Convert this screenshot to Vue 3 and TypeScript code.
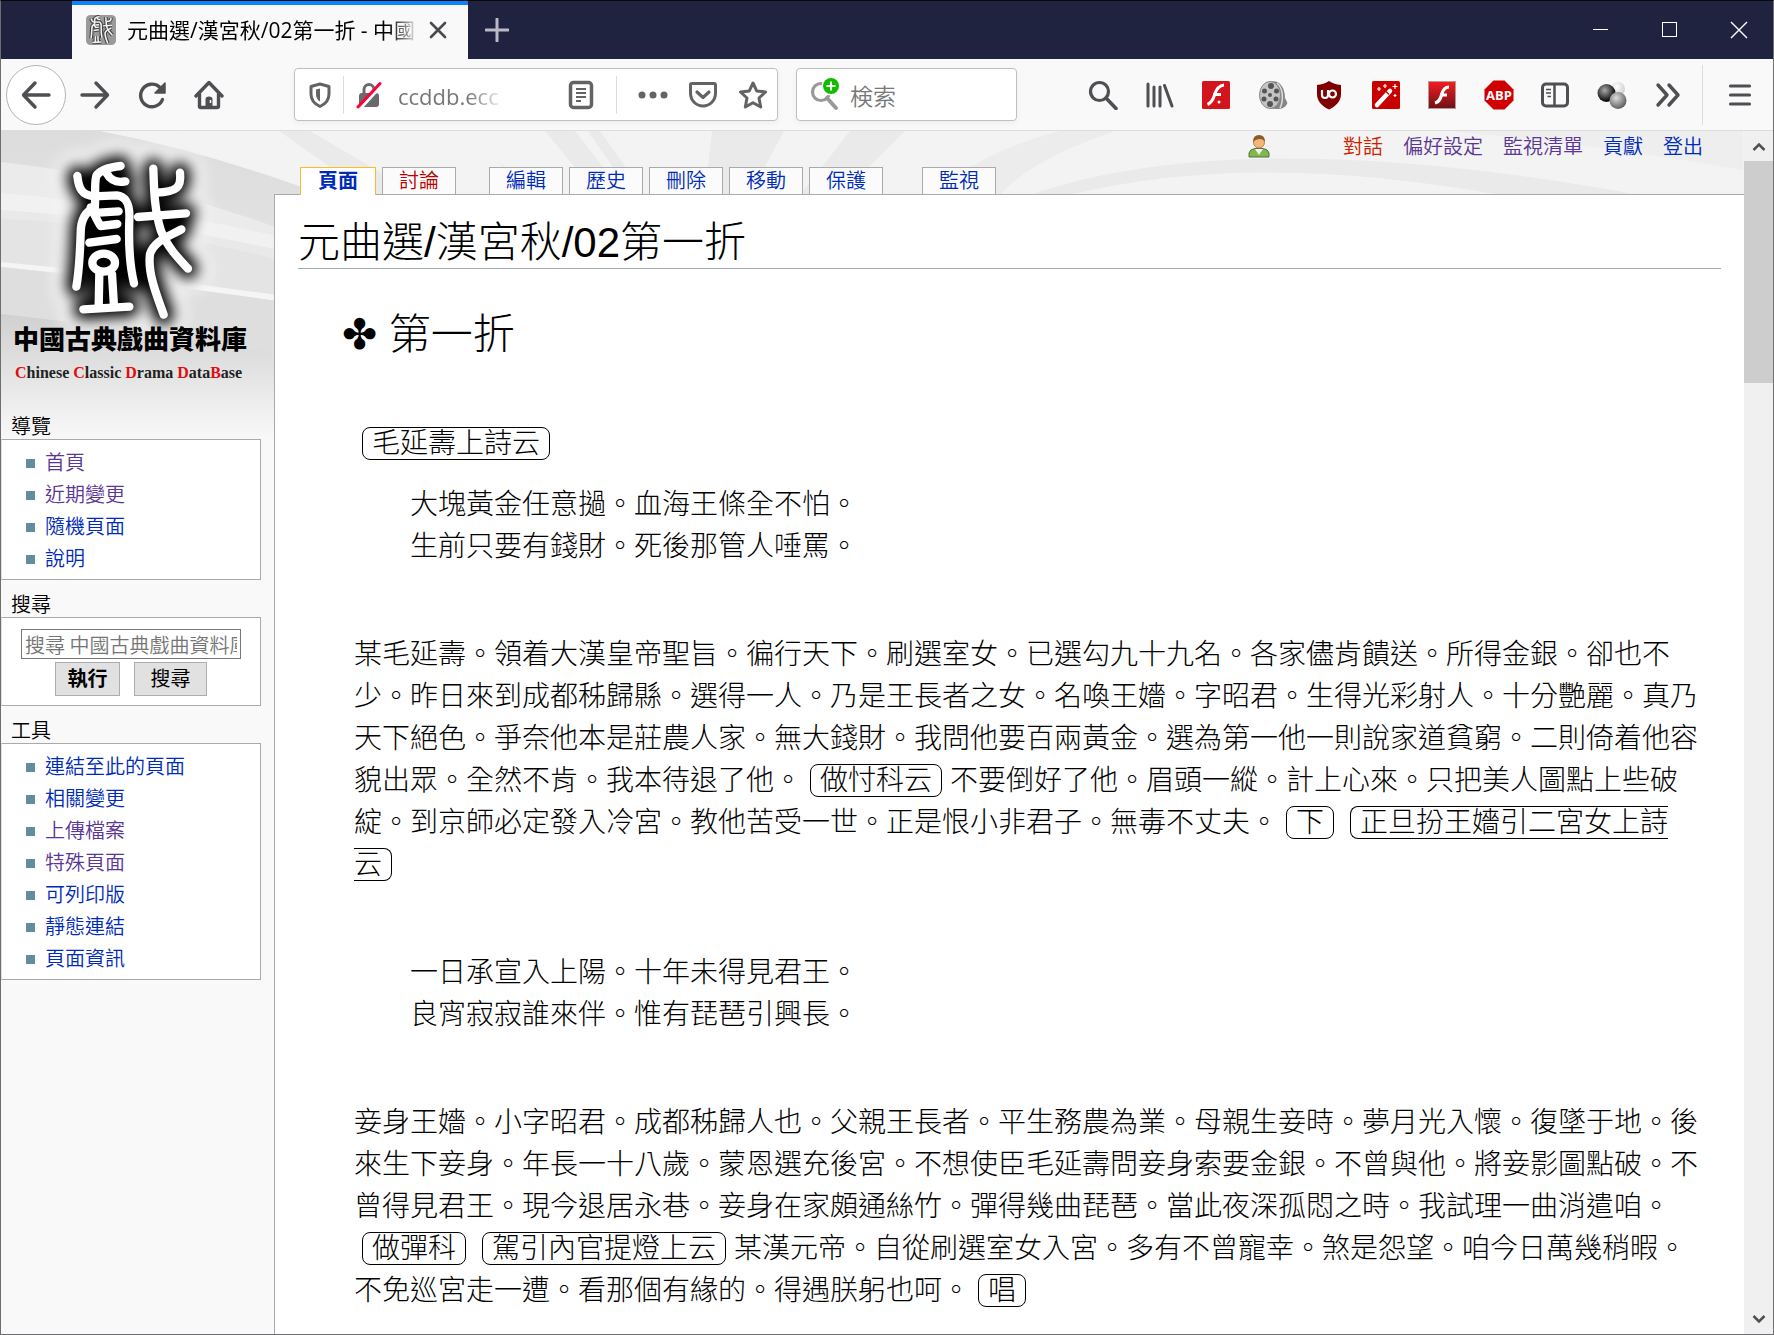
<script setup lang="ts">
interface NavLink { text: string; tone: 'new' | 'visited' | 'plain' }
interface Segment { text: string; cue?: boolean }

const personal: NavLink[] = [
  { text: '對話', tone: 'new' },
  { text: '偏好設定', tone: 'visited' },
  { text: '監視清單', tone: 'visited' },
  { text: '貢獻', tone: 'plain' },
  { text: '登出', tone: 'plain' },
]
const tabGroups: { text: string; kind?: string }[][] = [
  [{ text: '頁面', kind: 'current' }, { text: '討論', kind: 'missing' }],
  [{ text: '編輯' }, { text: '歷史' }, { text: '刪除' }, { text: '移動' }, { text: '保護' }],
  [{ text: '監視' }],
]
const navigation: NavLink[] = [
  { text: '首頁', tone: 'visited' },
  { text: '近期變更', tone: 'visited' },
  { text: '隨機頁面', tone: 'plain' },
  { text: '說明', tone: 'plain' },
]
const tools: NavLink[] = [
  { text: '連結至此的頁面', tone: 'plain' },
  { text: '相關變更', tone: 'plain' },
  { text: '上傳檔案', tone: 'visited' },
  { text: '特殊頁面', tone: 'visited' },
  { text: '可列印版', tone: 'plain' },
  { text: '靜態連結', tone: 'plain' },
  { text: '頁面資訊', tone: 'plain' },
]
const speechOne: Segment[] = [
  { text: '某毛延壽。領着大漢皇帝聖旨。徧行天下。刷選室女。已選勾九十九名。各家儘肯饋送。所得金銀。卻也不少。昨日來到成都秭歸縣。選得一人。乃是王長者之女。名喚王嬙。字昭君。生得光彩射人。十分艷麗。真乃天下絕色。爭奈他本是莊農人家。無大錢財。我問他要百兩黃金。選為第一他一則說家道貧窮。二則倚着他容貌出眾。全然不肯。我本待退了他。' },
  { text: '做忖科云', cue: true },
  { text: '不要倒好了他。眉頭一縱。計上心來。只把美人圖點上些破綻。到京師必定發入冷宮。教他苦受一世。正是恨小非君子。無毒不丈夫。' },
  { text: '下', cue: true },
  { text: '正旦扮王嬙引二宮女上詩云', cue: true },
]
const speechTwo: Segment[] = [
  { text: '妾身王嬙。小字昭君。成都秭歸人也。父親王長者。平生務農為業。母親生妾時。夢月光入懷。復墜于地。後來生下妾身。年長一十八歲。蒙恩選充後宮。不想使臣毛延壽問妾身索要金銀。不曾與他。將妾影圖點破。不曾得見君王。現今退居永巷。妾身在家頗通絲竹。彈得幾曲琵琶。當此夜深孤悶之時。我試理一曲消遣咱。' },
  { text: '做彈科', cue: true },
  { text: '駕引內官提燈上云', cue: true },
  { text: '某漢元帝。自從刷選室女入宮。多有不曾寵幸。煞是怨望。咱今日萬幾稍暇。不免巡宮走一遭。看那個有緣的。得遇朕躬也呵。' },
  { text: '唱', cue: true },
]
const sealStrokes: string[] = [
  'M362 138C335 141 300 148 289 168C282 190 288 230 284 268',
  'M320 160C330 178 345 190 376 184',
  'M232 168C236 205 245 226 282 229L350 226C385 230 390 262 388 300C385 380 390 440 402 490',
  'M284 264C256 274 242 300 242 340C240 400 238 450 229 500',
  'M272 262C285 285 292 305 302 318L352 312',
  'M296 278L356 274',
  'M268 368L350 357',
  'M298 462L296 560',
  'M336 462L342 560',
  'M250 568L388 560',
  'M460 146C462 200 462 265 482 330C500 380 540 420 564 446',
  'M540 158C545 202 530 216 470 218',
  'M414 291L558 280',
  'M544 328C510 348 464 360 450 402C442 460 472 530 491 584',
]
</script>

<template>
  <div class="window" lang="zh-TW">
    <header class="titlebar">
      <div class="browser-tab">
        <svg class="favicon" viewBox="150 110 470 500" preserveAspectRatio="none" aria-hidden="true">
          <rect x="150" y="110" width="470" height="500" rx="70" fill="#9a9a9a" />
          <g fill="none" stroke="#444" stroke-width="58"><path v-for="d in sealStrokes" :key="d" :d="d" /></g>
          <g fill="none" stroke="#f5f5f5" stroke-width="24"><path v-for="d in sealStrokes" :key="d" :d="d" /></g>
        </svg>
        <span class="tab-title">元曲選/漢宮秋/02第一折 - 中國</span>
        <button class="bare tab-close" type="button" aria-label="閉じる">
          <svg width="18" height="18" viewBox="0 0 18 18"><path d="M2 2L16 16M16 2L2 16" stroke="#4a4a4f" stroke-width="2.6" stroke-linecap="round" /></svg>
        </button>
      </div>
      <button class="bare new-tab" type="button" aria-label="新しいタブ">
        <svg width="24" height="24" viewBox="0 0 24 24"><path d="M12 1V23M1 12H23" stroke="#b9bac6" stroke-width="3" stroke-linecap="round" /></svg>
      </button>
      <div class="window-controls">
        <button class="bare" type="button" aria-label="最小化"><svg width="16" height="18" viewBox="0 0 16 18"><path d="M0 8.500H15" stroke="#fff" /></svg></button>
        <button class="bare" type="button" aria-label="最大化"><svg width="16" height="18" viewBox="0 0 16 18"><rect x=".5" y="1.500" width="14" height="14" fill="none" stroke="#fff" /></svg></button>
        <button class="bare" type="button" aria-label="閉じる"><svg width="18" height="18" viewBox="0 0 18 18"><path d="M1 1L17 17M17 1L1 17" stroke="#fff" stroke-width="1.400" /></svg></button>
      </div>
    </header>

    <nav class="toolbar" aria-label="ツールバー">
      <button class="bare back" type="button" aria-label="戻る">
        <svg width="30" height="30" viewBox="0 0 30 30"><path d="M28 15H3M14 3L2.500 15L14 27" class="line" /></svg>
      </button>
      <button class="bare tool" type="button" aria-label="進む">
        <svg width="30" height="30" viewBox="0 0 30 30"><path d="M2 15H27M16 3L27.500 15L16 27" class="line" /></svg>
      </button>
      <button class="bare tool" type="button" aria-label="再読み込み">
        <svg width="30" height="30" viewBox="0 0 30 30"><path d="M25.500 19.500A11.300 11.300 0 1 1 22.500 7" class="line" /><path d="M28 3V13H18Z" fill="#4f4f53" stroke="#4f4f53" stroke-width="1.500" stroke-linejoin="round" /></svg>
      </button>
      <button class="bare tool" type="button" aria-label="ホーム">
        <svg width="30" height="30" viewBox="0 0 30 30"><path d="M2 16L15 2.500L28 16" class="line" /><path d="M5.500 14V26.500Q5.500 27.500 7 27.500H23Q24.500 27.500 24.500 26V14" class="line" /><path d="M11.500 27V19Q11.500 16.500 15 16.500Q18.500 16.500 18.500 19V27Z" fill="#4f4f53" /><path d="M16.500 20v3" stroke="#fff" stroke-width="1.500" /></svg>
      </button>

      <div class="urlbar">
        <svg width="22" height="26" viewBox="0 0 22 26"><path d="M11 2L20 4.500V12C20 18 16.500 22 11 24.500C5.500 22 2 18 2 12V4.500Z" fill="none" stroke="#636366" stroke-width="3" stroke-linejoin="round" /><path d="M11 6.500L7 7.500V12C7 15.500 8.500 18 11 19.500Z" fill="#636366" /></svg>
        <i class="divider"></i>
        <svg width="26" height="28" viewBox="0 0 26 28"><rect x="3" y="12" width="20" height="14" rx="3" fill="#6a6a6e" /><path d="M8 13V8.500a5 5 0 0 1 10 0V13" fill="none" stroke="#6a6a6e" stroke-width="3" /><path d="M4.500 27.500L25.500 4.500" stroke="#fff" stroke-width="3" /><path d="M2 26L24 2.500" stroke="#ff0039" stroke-width="3" stroke-linecap="round" /></svg>
        <input class="address" type="text" value="ccddb.ecc" aria-label="アドレス" />
        <svg width="26" height="30" viewBox="0 0 26 30"><rect x="2.500" y="2.500" width="21" height="25" rx="3" fill="none" stroke="#636366" stroke-width="3.500" /><path d="M8 9H18M8 13H18M8 17H18M8 21H13" stroke="#636366" stroke-width="1.800" /></svg>
        <i class="divider far"></i>
        <svg width="30" height="10" viewBox="0 0 30 10"><g fill="#636366"><circle cx="4" cy="5" r="3.500" /><circle cx="15" cy="5" r="3.500" /><circle cx="26" cy="5" r="3.500" /></g></svg>
        <svg class="page-action" width="30" height="28" viewBox="0 0 30 28"><path d="M4 2.500H26Q27.500 2.500 27.500 4V12C27.500 19.500 22 25 15 25S2.500 19.500 2.500 12V4Q2.500 2.500 4 2.500Z" fill="none" stroke="#636366" stroke-width="3" /><path d="M9 11L15 16.500L21 11" fill="none" stroke="#636366" stroke-width="3.200" stroke-linecap="round" stroke-linejoin="round" /></svg>
        <svg class="page-action" width="30" height="30" viewBox="0 0 30 30"><path d="M15 3L18.700 10.900L27.500 12L21 18L22.700 27L15 22.700L7.300 27L9 18L2.500 12L11.300 10.900Z" fill="none" stroke="#636366" stroke-width="3" stroke-linejoin="round" /></svg>
      </div>

      <label class="searchbar">
        <svg width="34" height="36" viewBox="0 0 34 36"><circle cx="12" cy="15" r="8.500" fill="none" stroke="#999" stroke-width="3.200" /><path d="M18 21L27 31" stroke="#999" stroke-width="4" stroke-linecap="round" /><circle cx="22" cy="9" r="9.500" fill="#fff" /><circle cx="22" cy="9" r="8" fill="#12bc00" /><path d="M22 4.500V13.500M17.500 9H26.500" stroke="#fff" stroke-width="1.800" /></svg>
        <input type="text" placeholder="検索" aria-label="検索" />
      </label>

      <div class="extensions">
        <button class="bare" type="button" aria-label="検索"><svg width="30" height="30" viewBox="0 0 30 30"><circle cx="11.500" cy="11.500" r="9" fill="none" stroke="#4f4f53" stroke-width="3.200" /><path d="M18 18L28 28.500" stroke="#4f4f53" stroke-width="3.600" stroke-linecap="round" /></svg></button>
        <button class="bare" type="button" aria-label="ライブラリー"><svg width="30" height="30" viewBox="0 0 30 30"><path d="M3 4V26M9 7V26M15 7V26M19.500 5.500L27 26" stroke="#4f4f53" stroke-width="3" stroke-linecap="round" /></svg></button>
        <button class="bare" type="button" aria-label="Flash"><svg width="30" height="30" viewBox="0 0 30 30"><rect x="1" y="1" width="28" height="28" rx="1.500" fill="#d3141c" /><path d="M23 5C17 5.500 15 10 13.500 15S10 23 6.500 24.500" fill="none" stroke="#fff" stroke-width="3" /><path d="M12 14.500H20" stroke="#fff" stroke-width="3" /><circle cx="18" cy="22" r="1.500" fill="#fff" /></svg></button>
        <button class="bare" type="button" aria-label="Video"><svg width="30" height="30" viewBox="0 0 30 30"><path d="M13 1.500C22 0 27 8 27 18L29.500 23Q27 29.500 18 29L11 28.500Z" fill="#858585" /><path d="M19 3C25 8 26 20 22 28" fill="none" stroke="#ddd" stroke-width="1.500" /><ellipse cx="12" cy="15" rx="10.500" ry="13.500" fill="#c4c4c4" stroke="#888" /><g fill="#555"><circle cx="13" cy="6" r="3" /><circle cx="6.500" cy="11" r="2.500" /><circle cx="6" cy="19" r="2.500" /><circle cx="12" cy="24" r="3" /><circle cx="18" cy="19" r="2.500" /><circle cx="18.500" cy="11" r="2.500" /><circle cx="12" cy="15" r="2" /></g></svg></button>
        <button class="bare" type="button" aria-label="uBlock"><svg width="30" height="30" viewBox="0 0 30 30"><path d="M15 1Q20 4.500 27 5V14C27 21.500 22 26 15 29.500C8 26 3 21.500 3 14V5Q10 4.500 15 1Z" fill="#800000" /><path d="M8 10V15a3 3 0 0 0 6 0V10M14 10V15" fill="none" stroke="#fff" stroke-width="2.200" /><circle cx="18.500" cy="14" r="3.500" fill="none" stroke="#fff" stroke-width="2.200" /></svg></button>
        <button class="bare" type="button" aria-label="Wand"><svg width="30" height="30" viewBox="0 0 30 30"><rect x="1" y="1" width="28" height="28" rx="1.500" fill="#c90000" /><path d="M6 25L19 11" stroke="#fff" stroke-width="4.500" stroke-linecap="round" /><path d="M15 11.500l3 3" stroke="#c90000" stroke-width="1.200" /><g stroke="#fff" stroke-width="1.200"><path d="M14 4v4M12 6h4M24 4v5M21.500 6.500h5M8 7v4M6 9h4M24 14v3M22.500 15.500h3" /></g></svg></button>
        <button class="bare" type="button" aria-label="Flash"><svg width="30" height="30" viewBox="0 0 30 30"><defs><linearGradient id="flashFill" x1="0" y1="0" x2="0" y2="1"><stop offset="0" stop-color="#f51d20" /><stop offset="1" stop-color="#6c1216" /></linearGradient></defs><rect x="1.500" y="1.500" width="27" height="27" fill="url(#flashFill)" stroke="#b99" /><path d="M22 7C17 7 15.500 11 14.500 15S12 22 8 23" fill="none" stroke="#fff" stroke-width="3.200" /><path d="M13 15H20" stroke="#fff" stroke-width="3" /></svg></button>
        <button class="bare" type="button" aria-label="Adblock"><svg width="30" height="30" viewBox="0 0 30 30"><path d="M9.500 .5H20.500L29.500 9.500V20.500L20.500 29.500H9.500L.5 20.500V9.500Z" fill="#d00000" /><text x="15" y="20" text-anchor="middle" font-family="Open Sans, sans-serif" font-size="13" font-weight="700" fill="#fff">ABP</text></svg></button>
        <button class="bare" type="button" aria-label="サイドバー"><svg width="30" height="30" viewBox="0 0 30 30"><rect x="2.500" y="4" width="25" height="22" rx="3.500" fill="none" stroke="#4f4f53" stroke-width="3" /><path d="M14.500 4V26" stroke="#4f4f53" stroke-width="2.500" /><path d="M6 9.500H11M6 13H11M7.500 16.500H11" stroke="#4f4f53" stroke-width="1.500" /></svg></button>
        <button class="bare" type="button" aria-label="Spheres"><svg width="30" height="30" viewBox="0 0 30 30"><defs><radialGradient id="ballDark" cx=".4" cy=".35" r=".6"><stop offset="0" stop-color="#aaa" /><stop offset="1" stop-color="#0a0a0a" /></radialGradient><radialGradient id="ballGray" cx=".4" cy=".35" r=".7"><stop offset="0" stop-color="#ddd" /><stop offset="1" stop-color="#555" /></radialGradient><radialGradient id="ballPale" cx=".4" cy=".35" r=".7"><stop offset="0" stop-color="#fff" /><stop offset="1" stop-color="#ccc" /></radialGradient></defs><circle cx="21" cy="9" r="7" fill="url(#ballPale)" /><circle cx="9.500" cy="13" r="9" fill="url(#ballDark)" /><circle cx="21" cy="20.500" r="8.500" fill="url(#ballGray)" /></svg></button>
        <button class="bare" type="button" aria-label="その他"><svg width="30" height="30" viewBox="0 0 30 30"><path d="M5 5L14 15L5 25M16 5L25 15L16 25" class="line" /></svg></button>
      </div>
      <button class="bare menu" type="button" aria-label="メニュー">
        <svg width="24" height="24" viewBox="0 0 24 24"><path d="M2.500 3H21.500M2.500 12H21.500M2.500 21H21.500" stroke="#4f4f53" stroke-width="3.200" stroke-linecap="round" /></svg>
      </button>
    </nav>

    <div class="viewport">
      <div class="page">
        <svg class="backdrop" width="1743" height="310" viewBox="1 131 1743 310" aria-hidden="true">
          <defs>
            <linearGradient id="fadeDown" x1="0" y1="0" x2="0" y2="1"><stop offset="0" stop-color="#d0d0d0" /><stop offset="1" stop-color="#f9f9f9" /></linearGradient>
            <linearGradient id="wing" x1="0" y1="0" x2="0" y2="1"><stop offset="0" stop-color="#dcdcdc" /><stop offset="1" stop-color="#ededed" /></linearGradient>
          </defs>
          <rect x="1" y="131" width="1743" height="64" fill="#f3f3f3" />
          <path d="M0 131H100Q200 150 310 190V440H0Z" fill="url(#wing)" />
          <path d="M0 162Q150 178 310 240V300L0 215Z" fill="#ebebeb" />
          <path d="M0 193Q150 205 310 244V257Q150 220 0 210Z" fill="#f1f1f1" />
          <path d="M0 210Q150 220 310 257V330L0 262Z" fill="#e9e9e9" />
          <path d="M0 219Q150 224 310 268V340L0 262Z" fill="#e4e4e4" />
          <path d="M0 262Q150 276 310 300V306Q150 282 0 267Z" fill="#f5f5f5" />
          <path d="M0 267Q150 282 310 306V360L0 330Z" fill="#dedede" />
          <path d="M0 314Q150 330 310 360V441H0Z" fill="url(#fadeDown)" />
          <g fill="#eaeaea">
            <path d="M279 131H310L390 178V195H370Z" />
            <path d="M500 162L530 195H516Z" />
            <path d="M545 131H575L625 195H598Z" />
            <path d="M588 131H600L645 195H632Z" />
            <path d="M712 131H784L750 195H705Z" />
            <path d="M850 131H905L840 195H800Z" />
            <path d="M888 162L850 195H842Z" />
            <path d="M1060 131H1115Q1030 160 1000 195H930Q985 150 1060 131Z" opacity=".8" />
            <path d="M1030 195Q1240 122 1640 195H1500Q1250 150 1070 195Z" />
            <path d="M1450 131H1743V170Q1600 145 1450 131Z" opacity=".5" />
          </g>
        </svg>

        <aside class="sidebar">
          <a class="logo" href="#" aria-label="中國古典戲曲資料庫">
            <svg width="272" height="244" viewBox="0 0 272 244">
              <defs><filter id="glow" x="-40%" y="-40%" width="180%" height="180%"><feGaussianBlur stdDeviation="20" /></filter></defs>
              <g transform="translate(-1 -11) scale(.33333)" fill="none" stroke-linecap="round" stroke-linejoin="round">
                <g stroke="#f4f4f4" stroke-width="140" filter="url(#glow)"><path v-for="d in sealStrokes" :key="d" :d="d" /></g>
                <g stroke="#000" stroke-width="62" filter="url(#glow)"><path v-for="d in sealStrokes" :key="d" :d="d" /><ellipse cx="311" cy="428" rx="32" ry="26" /></g>
                <g stroke="#fff" stroke-width="25"><path v-for="d in sealStrokes" :key="d" :d="d" /><ellipse cx="311" cy="428" rx="34" ry="27" /></g>
              </g>
              <text x="12" y="218" class="logo-zh">中國古典戲曲資料庫</text>
              <text x="14" y="247" class="logo-en"><tspan>C</tspan>hinese <tspan>C</tspan>lassic <tspan>D</tspan>rama <tspan>D</tspan>ata<tspan>B</tspan>ase</text>
            </svg>
          </a>
          <section class="portlet">
            <h3>導覽</h3>
            <ul class="links">
              <li v-for="l in navigation" :key="l.text"><a href="#" :class="l.tone">{{ l.text }}</a></li>
            </ul>
          </section>
          <section class="portlet">
            <h3><label for="site-search">搜尋</label></h3>
            <form class="search-form" @submit.prevent>
              <input id="site-search" type="text" placeholder="搜尋 中國古典戲曲資料庫" />
              <div class="buttons">
                <button type="submit" class="go">執行</button>
                <button type="button">搜尋</button>
              </div>
            </form>
          </section>
          <section class="portlet">
            <h3>工具</h3>
            <ul class="links">
              <li v-for="l in tools" :key="l.text"><a href="#" :class="l.tone">{{ l.text }}</a></li>
            </ul>
          </section>
        </aside>

        <div class="main">
          <div class="page-head">
            <div class="personal">
              <svg width="22" height="24" viewBox="0 0 22 24" aria-hidden="true"><path d="M1 23V19Q2 15 7 14.500H15Q20 15 21 19V23Z" fill="#7fb84e" stroke="#54743c" /><path d="M7 15L11 21L15 15Z" fill="#f4f4ee" /><circle cx="11" cy="8.500" r="5.500" fill="#f0b778" stroke="#a5703a" stroke-width=".8" /><path d="M5 8Q5 1 11 1T17 8Q15 4.500 11 5T5 8Z" fill="#8a5a2b" /></svg>
              <a v-for="l in personal" :key="l.text" href="#" :class="l.tone">{{ l.text }}</a>
            </div>
            <div class="tabs">
              <div v-for="(group, i) in tabGroups" :key="i" class="tab-group">
                <a v-for="t in group" :key="t.text" href="#" :class="t.kind">{{ t.text }}</a>
              </div>
            </div>
          </div>
          <main class="article">
            <h1>元曲選/漢宮秋/02第一折</h1>
            <div class="text">
              <h2>✤ 第一折</h2>
              <p class="opening"><span class="cue">毛延壽上詩云</span></p>
              <p class="verse">大塊黃金任意撾。血海王條全不怕。<br />生前只要有錢財。死後那管人唾罵。</p>
              <p class="speech"><template v-for="(s, i) in speechOne" :key="i"><span v-if="s.cue" class="cue">{{ s.text }}</span><template v-else>{{ s.text }}</template></template></p>
              <p class="verse">一日承宣入上陽。十年未得見君王。<br />良宵寂寂誰來伴。惟有琵琶引興長。</p>
              <p class="speech"><template v-for="(s, i) in speechTwo" :key="i"><span v-if="s.cue" class="cue">{{ s.text }}</span><template v-else>{{ s.text }}</template></template></p>
            </div>
          </main>
        </div>
      </div>
      <div class="scrollbar" aria-hidden="true">
        <svg width="14" height="10" viewBox="0 0 14 10"><path d="M1.500 8L7 2.500L12.500 8" fill="none" stroke="#505050" stroke-width="2.500" /></svg>
        <div class="thumb"></div>
        <svg class="down" width="14" height="10" viewBox="0 0 14 10"><path d="M1.500 2L7 7.500L12.500 2" fill="none" stroke="#505050" stroke-width="2.500" /></svg>
      </div>
    </div>
  </div>
</template>

<style>
body { margin: 0; }
</style>

<style scoped>
* { box-sizing: border-box; }
.window {
  display: flex;
  flex-direction: column;
  min-height: 100vh;
  border: 1px solid #6e6e70;
  border-top-color: #07070c;
  background: #f9f9fa;
  font-family: "Liberation Sans", "Noto Sans CJK TC", sans-serif;
  font-weight: 300;
  color: #000;
}
.bare { border: 0; padding: 0; background: none; display: flex; align-items: center; justify-content: center; }
svg { display: block; flex: none; }
a { text-decoration: none; }
.line { fill: none; stroke: #4f4f53; stroke-width: 3.4; stroke-linecap: round; stroke-linejoin: round; }
.plain { color: #002bb8; }
.visited { color: #5a3696; }
.new { color: #cc2200; }

.titlebar { display: flex; height: 58px; background: #202340; padding-left: 71px; }
.browser-tab {
  display: flex;
  align-items: center;
  width: 396px;
  border-top: 4px solid #0a84ff;
  background: #f9f9fa;
  padding: 0 20px 4px 14px;
}
.favicon { width: 30px; height: 30px; }
.tab-title {
  flex: 1;
  margin-left: 11px;
  overflow: hidden;
  white-space: nowrap;
  font: 400 21px/32px "Open Sans", "Noto Sans CJK JP", sans-serif;
  mask-image: linear-gradient(to right, #000 262px, transparent 292px);
}
.tab-close { width: 20px; }
.new-tab { width: 58px; }
.window-controls { display: flex; margin-left: auto; }
.window-controls .bare { width: 69px; }

.toolbar { display: flex; align-items: center; height: 72px; border-bottom: 1px solid #dcdcde; padding: 0 5px; }
.back { width: 60px; height: 60px; border: 1px solid #b4b4b8; border-radius: 50%; background: #fff; }
.tool { width: 57px; }
.urlbar, .searchbar {
  display: flex;
  align-items: center;
  height: 53px;
  border: 1px solid #c0c0c3;
  border-radius: 4px;
  background: #fff;
  box-shadow: 0 2px 6px #0000000d;
}
.urlbar { width: 484px; margin-left: 57px; padding: 0 9px 0 14px; }
.divider { width: 1px; height: 38px; margin: 0 12px; background: #dcdcde; }
.divider.far { margin: 0 21px 0 22px; }
.address {
  flex: 1;
  min-width: 0;
  margin: 2px 60px 0 16px;
  border: 0;
  padding: 0;
  background: none;
  font: 22px/32px "Open Sans", sans-serif;
  color: #777;
  mask-image: linear-gradient(to right, #000 70px, transparent 108px);
}
.page-action { margin-left: 20px; }
.searchbar { width: 221px; margin-left: 18px; padding: 0 12px; }
.searchbar input { width: 140px; margin: 0 0 0 7px; border: 0; padding: 0; background: none; font: 350 23px/32px "Noto Sans CJK JP", sans-serif; }
.searchbar input::placeholder { color: #777; opacity: 1; }
.extensions { display: flex; justify-content: space-between; width: 595px; margin-left: auto; }
.menu { width: 66px; height: 60px; margin-left: 19px; border-left: 1px solid #dcdcde; padding-left: 8px; }

.viewport { display: flex; flex: 1; }
.page { position: relative; display: flex; flex: 1; min-width: 0; overflow: hidden; background: #f9f9f9; }
.backdrop { position: absolute; top: 0; left: 0; }
.sidebar { position: relative; width: 273px; flex: none; font-weight: 350; }
.logo { display: block; padding-bottom: 36px; }
.logo svg { overflow: visible; }
.logo-zh { font: 900 26px "Noto Sans CJK TC", sans-serif; }
.logo-en { font: 700 16px "Liberation Serif", serif; fill: #222; }
.logo-en tspan { fill: #e00d12; }
.portlet { width: 260px; margin-bottom: 9px; }
.portlet h3 { margin: 0; padding: 4px 0 0 10px; font-size: 20px; font-weight: 350; line-height: 24px; }
.links { margin: 0; padding: 7px 0 4px 24px; border: 1px solid #aaa; border-left-color: #ddd; background: #fff; list-style: none; }
.links li { display: flex; align-items: center; height: 32px; font-size: 20px; line-height: 32px; }
.links li::before { content: ""; width: 9px; height: 9px; margin-right: 10px; background: #638c9c; }
.search-form { display: flex; flex-direction: column; align-items: center; height: 89px; padding: 11px 0; border: 1px solid #aaa; border-left-color: #ddd; background: #fff; }
.search-form input { width: 220px; height: 30px; border: 1px solid #767676; padding: 0 3px; font: 350 20px/26px "Noto Sans CJK TC", sans-serif; }
.search-form input::placeholder { color: #757575; opacity: 1; }
.buttons { display: flex; gap: 14px; margin-top: 3px; }
.buttons button { width: 73px; height: 34px; border: 1px solid #adadad; padding: 0 0 2px; background: #e1e1e1; font: 400 20px/26px "Noto Sans CJK TC", sans-serif; color: #000; }
.buttons .go { width: 65px; font-weight: 700; }

.main { position: relative; display: flex; flex-direction: column; flex: 1; min-width: 0; }
.page-head { height: 63px; display: flex; flex-direction: column; justify-content: space-between; font-weight: 350; }
.personal { display: flex; justify-content: flex-end; gap: 20px; padding: 3px 41px 0 0; font-size: 20px; line-height: 26px; }
.personal svg { margin-right: 53px; }
.tabs { display: flex; gap: 33px; padding-left: 26px; }
.tab-group { display: flex; gap: 6px; }
.tab-group:last-child { margin-left: 6px; }
.tabs a { height: 27px; border: 1px solid #aaa; border-bottom: 0; padding: 0 16px; background: #fbfbfb; font-size: 20px; line-height: 26px; color: #002bb8; }
.tabs .current { position: relative; height: 28px; margin-bottom: -1px; padding: 0 17px; border-color: #fabd23; background: #fff; font-weight: 700; }
.tabs .missing { color: #ba0000; }
.article { flex: 1; border: 1px solid #aaa; border-width: 1px 0 0 1px; padding: 23px 23px 20px; background: #fff; }
h1, h2 { margin: 0; font-size: 42px; font-weight: 300; line-height: 50px; }
h1 { border-bottom: 1px solid #a2a9b1; }
.text { padding: 41px 16px 0 56px; font-size: 28px; line-height: 42px; }
.text p { margin: 0 0 66px; }
.text p:last-child { margin-bottom: 0; }
.text h2 { margin: 0 0 63px -12px; }
.text .opening { margin-bottom: 19px; }
.text .verse { padding-left: 56px; }
.cue { margin: 0 8px; border: 1px solid #000; border-radius: 8px; padding: 0 9px; }

.scrollbar { display: flex; flex-direction: column; align-items: center; width: 29px; background: #f0f0f0; padding: 11px 0 10px; }
.thumb { width: 29px; height: 222px; margin-top: 9px; background: #cdcdcd; }
.down { margin-top: auto; }
</style>
